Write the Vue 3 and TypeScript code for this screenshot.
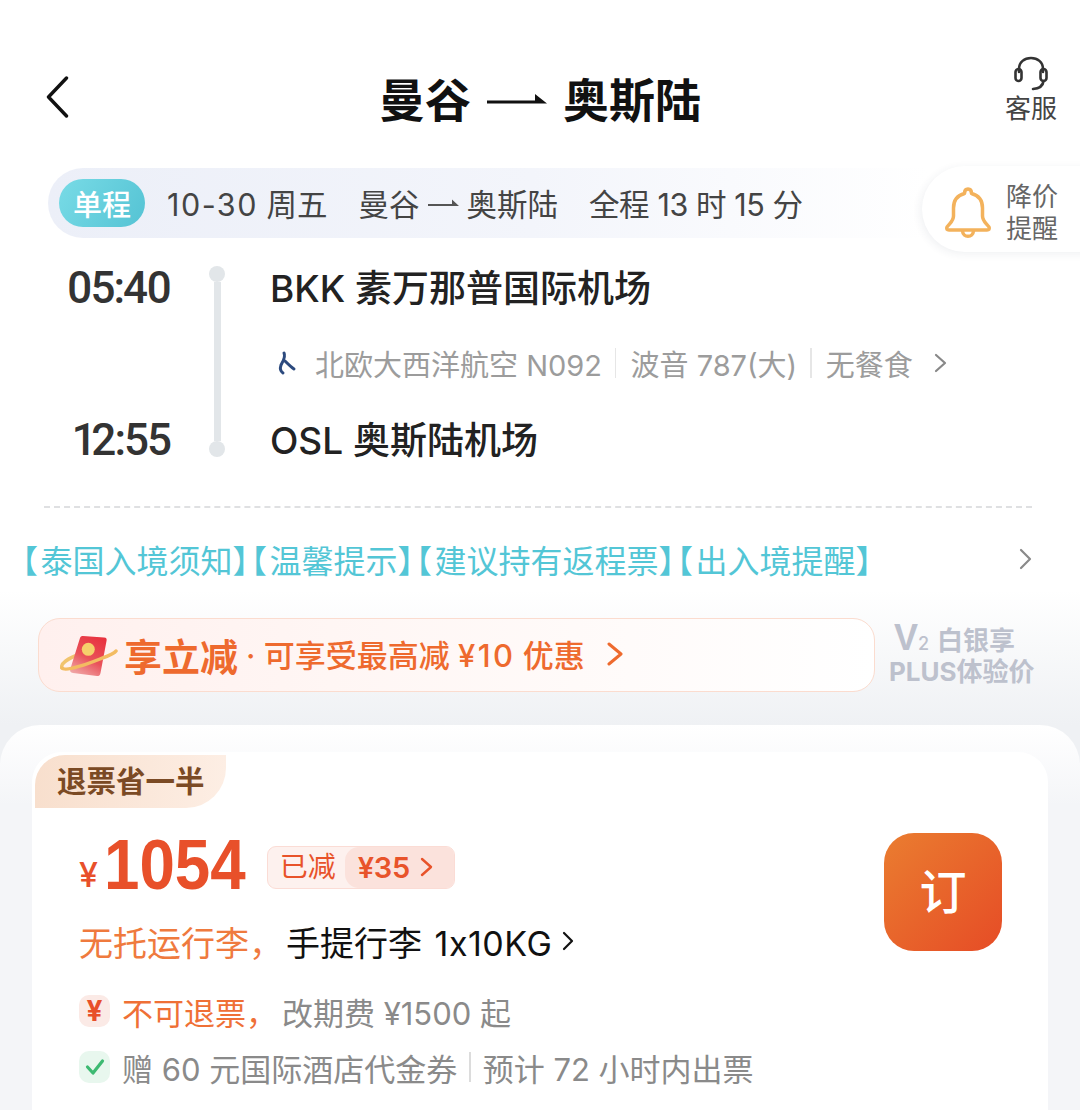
<script setup lang="ts">
const notices: string[] = ['泰国入境须知', '温馨提示', '建议持有返程票', '出入境提醒']
</script>

<template>
  <div class="page">
    <header class="header">
      <svg class="back" width="24" height="42" viewBox="0 0 24 42" fill="none">
        <path d="M21.500 2 L3.500 21 L21.500 40" stroke="#111" stroke-width="3.4" stroke-linecap="round" stroke-linejoin="round" />
      </svg>
      <h1 class="title">
        <span>曼谷</span>
        <svg class="route-arrow" width="60" height="14" viewBox="0 0 60 14">
          <path d="M0 7.500 H48 V1 L60 10.500 H0 Z" fill="#111" />
        </svg>
        <span>奥斯陆</span>
      </h1>
      <div class="service">
        <svg width="36" height="36" viewBox="0 0 36 36" fill="none" stroke="#333" stroke-width="2.6" stroke-linecap="round">
          <path d="M6 16 V13 C6 6 11.500 2 18 2 C24.500 2 30 6 30 13 V16" />
          <rect x="2.500" y="13" width="6" height="12" rx="3" />
          <rect x="27.500" y="13" width="6" height="12" rx="3" />
          <path d="M30.500 25 C30 30 26 32.500 20 33" />
        </svg>
        <span>客服</span>
      </div>
    </header>

    <section class="strip-row">
      <div class="strip">
        <span class="pill">单程</span>
        <span class="strip-date"><span class="wide">10-30</span> 周五</span>
        <span class="strip-route">
          曼谷
          <svg width="31" height="9" viewBox="0 0 31 9"><path d="M0 5 H24 V0.500 L31 7 H0 Z" fill="#555" /></svg>
          奥斯陆
        </span>
        <span class="strip-total">全程 13 时 15 分</span>
      </div>
      <div class="alert">
        <svg width="48" height="54" viewBox="0 0 48 54" fill="none" stroke="#f3b25c" stroke-width="3.500" stroke-linejoin="round">
          <path d="M24 3 C21.500 3 20.500 5 20.500 7.500 C13 9.500 9.500 15 9.500 22 V30 C9.500 35 6 37 3 41 C2 43 3 44 5 44 H43 C45 44 46 43 45 41 C42 37 38.500 35 38.500 30 V22 C38.500 15 35 9.500 27.500 7.500 C27.500 5 26.500 3 24 3 Z" />
          <path d="M18.500 45 C19 52 29 52 29.500 45" />
        </svg>
        <span class="alert-text">降价<br />提醒</span>
      </div>
    </section>

    <section class="timeline">
      <div class="time">05:40</div>
      <div class="rail"><i class="dot" /><i class="line" /><i class="dot" /></div>
      <div class="airport">BKK 素万那普国际机场</div>
      <div class="flight">
        <svg class="logo" width="24" height="30" viewBox="0 0 24 30" fill="none" stroke="#2c4a7e" stroke-width="3" stroke-linecap="round">
          <path d="M10 5 C12 9 9 13 7 17 C6 20 6 23 9 25" />
          <path d="M11 13 C14 16 17 19 20 21" />
        </svg>
        <span>北欧大西洋航空 N092</span>
        <i class="sep" />
        <span>波音 787(大)</span>
        <i class="sep" />
        <span>无餐食</span>
        <svg class="flight-chev" width="14" height="20" viewBox="0 0 14 20" fill="none">
          <path d="M2 2 L11 10 L2 18" stroke="#888" stroke-width="2.200" stroke-linecap="round" stroke-linejoin="round" />
        </svg>
      </div>
      <div class="time">12:55</div>
      <div class="airport">OSL 奥斯陆机场</div>
    </section>

    <div class="dashed" />

    <section class="notices">
      <div class="notice-text">
        <span v-for="n in notices" :key="n"><span class="br">【</span>{{ n }}<span class="br">】</span></span>
      </div>
      <svg width="14" height="22" viewBox="0 0 14 22" fill="none">
        <path d="M2 2 L11 11 L2 20" stroke="#8a8a8a" stroke-width="2.200" stroke-linecap="round" stroke-linejoin="round" />
      </svg>
    </section>

    <section class="promo-row">
      <div class="promo">
        <svg class="packet" width="58" height="44" viewBox="0 0 58 44">
          <defs>
            <linearGradient id="pk" x1="0.750" y1="0" x2="0.250" y2="1">
              <stop offset="0" stop-color="#e8323f" />
              <stop offset="0.550" stop-color="#e9525a" />
              <stop offset="1" stop-color="#f0a5a5" />
            </linearGradient>
          </defs>
          <path d="M20 21 C8 25 0 31 2 35" fill="none" stroke="#f1c46e" stroke-width="3.500" stroke-linecap="round" />
          <path d="M20 5 C20.500 3.500 21.500 3 23 3 L44 4.500 C46.500 4.700 47 6 46.500 8 L40.500 40 C40 42.500 39 43 37 43 L13 40 C10.500 39.700 9.700 38.500 10.300 36 Z" fill="url(#pk)" />
          <circle cx="28.300" cy="16.300" r="6.500" fill="#f6cf6b" />
          <path d="M2 35 C4 38 20 34 40 26 C48 23 54 21 56 18" fill="none" stroke="#f3bc62" stroke-width="3.500" stroke-linecap="round" />
        </svg>
        <span class="promo-main">享立减</span>
        <span class="promo-sub">· 可享受最高减 <span class="promo-num">¥10</span> 优惠</span>
        <svg class="promo-chev" width="16" height="24" viewBox="0 0 16 24" fill="none">
          <path d="M2 2 L14 12 L2 22" stroke="#ee6a2e" stroke-width="3" stroke-linecap="round" stroke-linejoin="round" />
        </svg>
      </div>
      <div class="plus">
        <div class="plus-top"><b>V</b><small>2</small><span>白银享</span></div>
        <div class="plus-bottom">PLUS体验价</div>
      </div>
    </section>

    <section class="sheet">
      <article class="ticket">
        <div class="ribbon">退票省一半</div>
        <div class="ticket-body">
          <div class="ticket-info">
            <div class="price-row">
              <span class="yen">¥</span>
              <span class="amount">1054</span>
              <span class="discount">
                <span class="disc-left">已减</span>
                <span class="disc-right">¥35
                  <svg width="13" height="20" viewBox="0 0 13 20" fill="none">
                    <path d="M2 2 L11 10 L2 18" stroke="#e8532a" stroke-width="2.400" stroke-linecap="round" stroke-linejoin="round" />
                  </svg>
                </span>
              </span>
            </div>
            <div class="bag">
              <span class="bag-warn">无托运行李，</span>
              <span class="bag-carry">手提行李 <span class="bag-num">1x10KG</span></span>
              <svg width="12" height="20" viewBox="0 0 12 20" fill="none">
                <path d="M2 2 L10 10 L2 18" stroke="#111" stroke-width="2.200" stroke-linecap="round" stroke-linejoin="round" />
              </svg>
            </div>
            <div class="rule">
              <span class="chip chip-red">¥</span>
              <span class="rule-warn">不可退票，</span>
              <span>改期费 ¥1500 起</span>
            </div>
            <div class="rule rule-second">
              <span class="chip chip-green">
                <svg width="20" height="18" viewBox="0 0 20 18" fill="none">
                  <path d="M2.500 9 L8 15 L17.500 3" stroke="#3dba72" stroke-width="3.200" stroke-linecap="round" stroke-linejoin="round" />
                </svg>
              </span>
              <span>赠 60 元国际酒店代金券</span>
              <i class="sep sep-rule" />
              <span>预计 72 小时内出票</span>
            </div>
          </div>
          <button class="book" type="button">订</button>
        </div>
      </article>
    </section>
  </div>
</template>

<style scoped>
.page {
  width: 1080px;
  height: 1110px;
  overflow: hidden;
  position: relative;
  font-family: Inter, "Noto Sans CJK SC", sans-serif;
  background: linear-gradient(180deg, #fff 0, #fff 590px, #eff1f4 725px);
  color: #333;
}
.header {
  height: 168px;
  box-sizing: border-box;
  padding: 56px 23px 0;
  display: grid;
  grid-template-columns: 1fr auto 1fr;
  align-items: start;
}
.back { margin: 20px 0 0 22px; }
.title {
  margin: 10px 0 0;
  display: flex;
  align-items: center;
  gap: 16px;
  font-size: 46px;
  line-height: 68px;
  font-weight: 700;
  color: #111;
}
.service {
  justify-self: end;
  width: 52px;
  display: flex;
  flex-direction: column;
  align-items: center;
  font-size: 26px;
  line-height: 34px;
  color: #444;
}
.strip-row { position: relative; height: 90px; padding-left: 48px; }
.strip {
  width: 880px;
  height: 70px;
  box-sizing: border-box;
  border-radius: 35px 0 0 35px;
  padding-left: 11px;
  display: flex;
  align-items: center;
  gap: 31px;
  font-size: 30.500px;
  color: #444;
  background: linear-gradient(90deg, #eceff8 0, #f3f5fb 55%, #fff 100%);
}
.pill {
  width: 86px;
  height: 48px;
  margin-right: -9px;
  border-radius: 24px;
  display: flex;
  align-items: center;
  justify-content: center;
  color: #fff;
  font-size: 29px;
  font-weight: 500;
  background: linear-gradient(120deg, #78dbe6, #55c3d4);
}
.wide { letter-spacing: 1.500px; }
.strip-route { display: flex; align-items: center; gap: 8px; }
.strip-total { letter-spacing: -0.400px; }
.alert {
  position: absolute;
  left: 922px;
  top: -2px;
  width: 170px;
  height: 86px;
  box-sizing: border-box;
  padding: 8px 0 0 22px;
  border-radius: 43px 0 0 43px;
  background: #fff;
  box-shadow: -2px 2px 8px rgba(40, 50, 80, 0.07);
  display: flex;
  align-items: center;
  gap: 14px;
}
.alert-text { font-size: 26px; line-height: 32px; color: #666; }
.timeline {
  height: 194px;
  margin-top: 8px;
  display: grid;
  grid-template-columns: 170px 94px 1fr;
  grid-template-rows: 44px 110px 40px;
  align-items: center;
}
.time {
  text-align: right;
  font-family: Roboto, sans-serif;
  font-size: 44px;
  font-weight: 500;
  font-variant-numeric: proportional-nums;
  letter-spacing: -2px;
  color: #333;
}
.rail {
  grid-column: 2;
  grid-row: 1 / 4;
  justify-self: center;
  height: 191px;
  align-self: start;
  display: flex;
  flex-direction: column;
  align-items: center;
  width: 16px;
}
.dot { width: 16px; height: 16px; border-radius: 50%; background: #e2e6e9; flex: none; }
.line { width: 7px; flex: 1; background: #e2e6e9; }
.airport { font-size: 37px; font-weight: 500; color: #222; padding-left: 6px; margin-bottom: 5px; }
.flight {
  grid-column: 3;
  display: flex;
  align-items: center;
  font-size: 29px;
  color: #9c9c9c;
  padding-left: 10px;
  margin-bottom: 4px;
}
.logo { margin-right: 17px; }
.sep { width: 1.500px; height: 30px; background: #e6e6e6; margin: 0 14px 0 13px; display: block; }
.flight-chev { margin-left: 21px; }
.dashed {
  height: 0;
  margin: 46px 48px 0 44px;
  border-top: 2px dashed #dfe0e2;
}
.notices {
  height: 108px;
  box-sizing: border-box;
  display: flex;
  align-items: center;
  justify-content: space-between;
  padding: 0 47px 6px 22px;
  color: #53c6d6;
}
.notice-text { font-size: 32px; white-space: nowrap; }
.br { font-feature-settings: "halt"; display: inline-block; width: 18.500px; }
.promo-row {
  height: 109px;
  display: flex;
  padding-left: 38px;
  align-items: flex-start;
}
.promo {
  width: 837px;
  height: 74px;
  box-sizing: border-box;
  margin-top: 2px;
  border: 1.500px solid #fbdccf;
  border-radius: 22px;
  background: linear-gradient(90deg, #fff0ee 0, #fff6f4 35%, #fff 100%);
  display: flex;
  align-items: center;
  padding-left: 21px;
  color: #ee6a2e;
}
.packet { flex: none; margin-right: 6px; }
.promo-main { font-size: 38px; font-weight: 700; margin-bottom: 2px; }
.promo-sub { font-size: 31px; font-weight: 500; margin: 0 0 4px 8px; white-space: nowrap; }
.promo-num { letter-spacing: 2.500px; margin-right: -1px; }
.promo-chev { margin: 0 0 2px 22px; }
.plus {
  margin-left: 14px;
  color: #bdc1cd;
  font-weight: 700;
  white-space: nowrap;
  font-size: 26px;
}
.plus-top {
  display: flex;
  align-items: baseline;
  height: 38px;
  padding-left: 5px;
  line-height: 44px;
}
.plus-top b { font-size: 36px; font-family: "Liberation Sans", sans-serif; }
.plus-top small { font-size: 18px; font-weight: 500; margin-right: 8px; }
.plus-bottom { line-height: 36px; font-size: 26px; }
.sheet {
  height: 385px;
  border-radius: 40px 40px 0 0;
  background: linear-gradient(180deg, #fff 0, #f4f5f8 80px);
  padding: 27px 32px 0;
}
.ticket {
  height: 100%;
  background: #fff;
  border-radius: 30px 30px 0 0;
  position: relative;
}
.ribbon {
  width: 191px;
  height: 53px;
  margin-left: 3px;
  position: relative;
  top: 3px;
  box-sizing: border-box;
  padding-left: 22px;
  border-radius: 30px 0 40px 0;
  background: linear-gradient(90deg, #f8dfcd, #fdeee4);
  color: #7b4a24;
  font-size: 29.500px;
  font-weight: 700;
  line-height: 53px;
}
.ticket-body {
  display: flex;
  justify-content: space-between;
  padding: 24px 46px 0 47px;
}
.price-row { display: flex; align-items: center; height: 72px; }
.yen { font-size: 34px; font-weight: 500; color: #e8502a; align-self: flex-end; line-height: 52px; margin-right: 6px; }
.amount {
  display: inline-block;
  font-family: "Liberation Sans", sans-serif;
  font-size: 70px;
  font-weight: 700;
  line-height: 72px;
  color: #e8502a;
  transform: scaleX(0.91);
  transform-origin: left center;
  margin-right: -14px;
}
.discount {
  margin: 4px 0 0 21px;
  height: 43px;
  box-sizing: border-box;
  border: 1.500px solid #fbdcd5;
  border-radius: 9px;
  display: flex;
  overflow: hidden;
  color: #e8532a;
  background: #fdf1ee;
}
.disc-left { font-size: 28px; line-height: 40px; padding: 0 9px 0 12px; }
.disc-right {
  display: flex;
  align-items: center;
  gap: 10px;
  padding: 0 21px 0 13px;
  font-size: 29px;
  font-weight: 600;
  letter-spacing: -0.300px;
  background: #fbe2dc;
  border-radius: 14px 0 0 14px;
}
.bag {
  display: flex;
  align-items: center;
  height: 50px;
  margin-top: 15px;
  font-size: 34px;
}
.bag-warn { color: #ef7a3e; width: 207px; white-space: nowrap; }
.bag-carry { color: #111; margin-right: 10px; }
.bag-num { letter-spacing: 0.500px; margin-left: 3px; }
.rule {
  display: flex;
  align-items: center;
  height: 34px;
  margin-top: 28px;
  font-size: 31px;
  color: #8a8a8a;
  white-space: nowrap;
}
.rule-second { margin-top: 22px; }
.chip {
  width: 31px;
  height: 32px;
  margin-right: 12px;
  border-radius: 10px;
  display: flex;
  align-items: center;
  justify-content: center;
  flex: none;
}
.chip-red { background: #fbeae6; color: #e8502a; font-size: 28px; font-weight: 700; }
.chip-green { background: #e8f7ee; }
.rule-warn { color: #ef7036; width: 160px; }
.sep-rule { margin: 0 12px; background: #dcdcdc; }
.book {
  width: 118px;
  height: 118px;
  border: none;
  border-radius: 30px;
  color: #fff;
  font-family: inherit;
  font-size: 47px;
  font-weight: 500;
  background: linear-gradient(135deg, #ea7d30, #e64c26);
  padding: 0 0 8px;
  margin-top: 4px;
}
</style>

<style>
html, body { margin: 0; overflow: hidden; background: #fff; }
</style>
